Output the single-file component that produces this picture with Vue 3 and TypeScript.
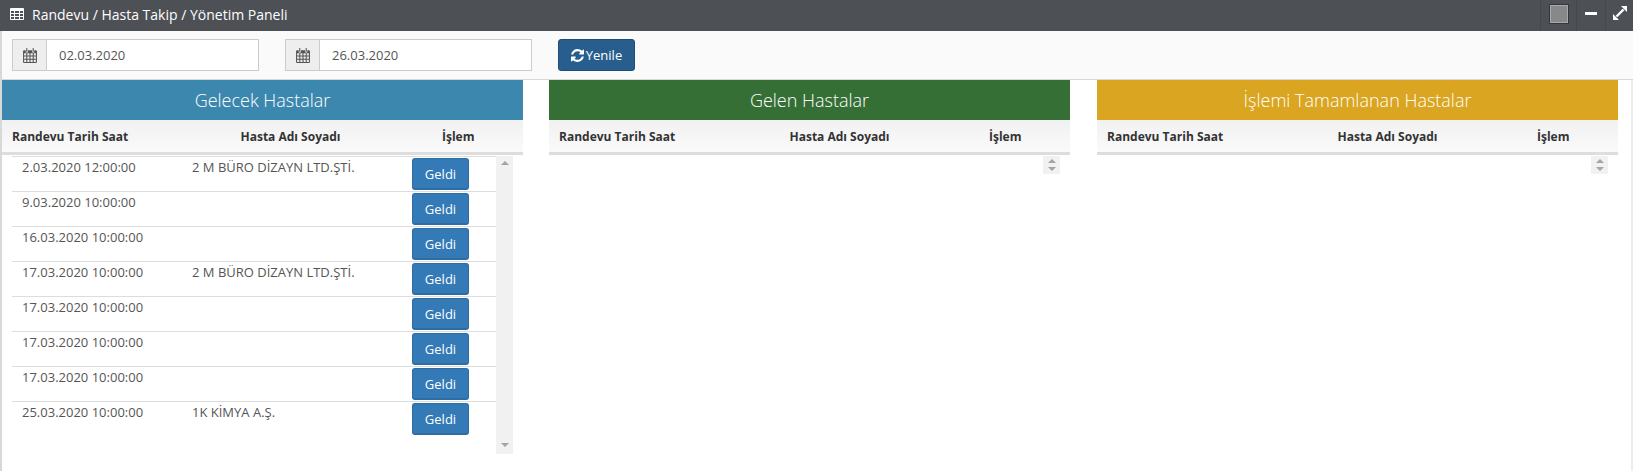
<script setup lang="ts">
interface Row { date: string; name: string }
const rows: Row[] = [
  { date: '2.03.2020 12:00:00', name: '2 M BÜRO DİZAYN LTD.ŞTİ.' },
  { date: '9.03.2020 10:00:00', name: '' },
  { date: '16.03.2020 10:00:00', name: '' },
  { date: '17.03.2020 10:00:00', name: '2 M BÜRO DİZAYN LTD.ŞTİ.' },
  { date: '17.03.2020 10:00:00', name: '' },
  { date: '17.03.2020 10:00:00', name: '' },
  { date: '17.03.2020 10:00:00', name: '' },
  { date: '25.03.2020 10:00:00', name: '1K KİMYA A.Ş.' },
]
const panels = [
  { title: 'Gelecek Hastalar', cls: 'blue', rows },
  { title: 'Gelen Hastalar', cls: 'green', rows: [] as Row[] },
  { title: 'İşlemi Tamamlanan Hastalar', cls: 'yellow', rows: [] as Row[] },
]
const dates = ['02.03.2020', '26.03.2020']
</script>

<template>
  <div class="page">
    <header class="topbar">
      <svg class="table-icon" viewBox="0 0 14 12" width="14" height="12">
        <path fill="#fff" fill-rule="evenodd" d="M1 0h12a1 1 0 0 1 1 1v10a1 1 0 0 1-1 1H1a1 1 0 0 1-1-1V1a1 1 0 0 1 1-1zM1 3v2h3V3zm4 0v2h4V3zm5 0v2h3V3zM1 6v2h3V6zm4 0v2h4V6zm5 0v2h3V6zM1 9v2h3V9zm4 0v2h4V9zm5 0v2h3V9z"/>
      </svg>
      <span class="caption">Randevu / Hasta Takip / Yönetim Paneli</span>
      <div class="tools">
        <div class="tool tool-square"><span class="square"></span></div>
        <div class="tool tool-min"><span class="minus"></span></div>
        <div class="tool tool-exp">
          <svg viewBox="0 0 14 14" width="14" height="14">
            <path fill="#fff" d="M8 0h6v6zM0 14V8l6 6z"/>
            <path stroke="#fff" stroke-width="2.4" d="M10.5 3.5l-7 7"/>
          </svg>
        </div>
      </div>
    </header>

    <div class="toolbar">
      <div v-for="d in dates" :key="d" class="date-group">
        <span class="addon">
          <svg viewBox="0 0 13 14" width="14" height="15">
            <path fill="#555" fill-rule="evenodd" d="M1 2h1.5v1.5a1 1 0 0 0 2 0V2h4v1.5a1 1 0 0 0 2 0V2H12a1 1 0 0 1 1 1v10a1 1 0 0 1-1 1H1a1 1 0 0 1-1-1V3a1 1 0 0 1 1-1zM1 5v2h2V5zm3 0v2h2V5zm3 0v2h2V5zm3 0v2h2V5zM1 8v2h2V8zm3 0v2h2V8zm3 0v2h2V8zm3 0v2h2V8zM1 11v2h2v-2zm3 0v2h2v-2zm3 0v2h2v-2zm3 0v2h2v-2z"/>
            <rect x="3" y="0" width="1" height="3.5" rx=".5" fill="#555"/>
            <rect x="9" y="0" width="1" height="3.5" rx=".5" fill="#555"/>
          </svg>
        </span>
        <span class="date-value">{{ d }}</span>
      </div>
      <button class="refresh" type="button">
        <svg viewBox="0 0 1536 1536" width="13" height="13">
          <path fill="#fff" d="M1511 928q0 5-1 7-64 268-268 434.5t-478 166.5q-146 0-282.5-55t-243.5-157l-129 129q-19 19-45 19t-45-19-19-45v-448q0-26 19-45t45-19h448q26 0 45 19t19 45-19 45l-137 137q71 66 161 102t187 36q134 0 250-65t186-179q11-17 53-117 8-23 30-23h192q13 0 22.5 9.5t9.5 22.5zm25-800v448q0 26-19 45t-45 19h-448q-26 0-45-19t-19-45 19-45l138-138q-148-137-349-137-134 0-250 65t-186 179q-11 17-53 117-8 23-30 23h-199q-13 0-22.5-9.5t-9.5-22.5v-7q65-268 270-434.5t480-166.5q146 0 284 55.5t245 156.5l130-129q19-19 45-19t45 19 19 45z"/>
        </svg>
        <span>Yenile</span>
      </button>
    </div>

    <main class="panels">
      <section v-for="p in panels" :key="p.title" class="panel">
        <h2 class="title" :class="p.cls">{{ p.title }}</h2>
        <div class="thead" :class="{ filled: p.rows.length }">
          <span class="th th-date">Randevu Tarih Saat</span>
          <span class="th th-name">Hasta Adı Soyadı</span>
          <span class="th th-act">İşlem</span>
        </div>
        <div class="tbody" :class="{ filled: p.rows.length }">
          <div class="list">
            <div v-for="(r, i) in p.rows" :key="i" class="row">
              <span class="cell-date">{{ r.date }}</span>
              <span class="cell-name">{{ r.name }}</span>
              <button class="geldi" type="button">Geldi</button>
            </div>
          </div>
          <div class="scrollbar">
            <span class="arrow up"></span>
            <span class="arrow down"></span>
          </div>
        </div>
      </section>
    </main>
  </div>
</template>

<style>
html, body { margin: 0; background: #fff; overflow: hidden; }
</style>

<style scoped>
.page {
  width: 1633px;
  height: 471px;
  box-sizing: border-box;
  font-family: "Open Sans", sans-serif;
  font-size: 13px;
  color: #555;
  overflow: hidden;
}
.topbar {
  height: 31px;
  background: #4d5055;
  display: flex;
  align-items: center;
  padding-left: 10px;
  color: #fff;
}
.table-icon { margin-right: 8px; margin-top: -4px; }
.caption { font-size: 14px; margin-top: -2px; }
.tools { margin-left: auto; display: flex; height: 31px; }
.tool {
  border-left: 1px solid #44474b;
  display: flex;
  align-items: center;
  justify-content: center;
  box-sizing: border-box;
}
.tool-square { width: 36px; padding-bottom: 3px; }
.tool-min { width: 29px; }
.tool-exp { width: 28px; }
.square {
  width: 16px;
  height: 16px;
  background: #87888a;
  border: 1px solid #a9a9aa;
  outline: 1px solid #35373a;
  display: block;
}
.minus { width: 12px; height: 3px; background: #fff; display: block; margin-bottom: 5px; }
.tool-exp svg { margin-bottom: 5px; }

.toolbar {
  height: 49px;
  box-sizing: border-box;
  background: #fafafa;
  border-bottom: 1px solid #d8d8d8;
  border-left: 2px solid #d8d8d8;
  padding: 8px 0 0 10px;
  display: flex;
  align-items: flex-start;
}
.date-group {
  width: 247px;
  height: 32px;
  box-sizing: border-box;
  border: 1px solid #ccc;
  background: #fff;
  display: flex;
  margin-right: 26px;
}
.addon {
  width: 33px;
  background: #eee;
  border-right: 1px solid #ccc;
  display: flex;
  align-items: center;
  justify-content: center;
}
.date-value { padding-left: 12px; line-height: 30px; color: #555; }
.refresh {
  width: 77px;
  height: 32px;
  margin: 0;
  padding: 0;
  box-sizing: border-box;
  background: #285e8e;
  border: 1px solid #204d74;
  border-radius: 3px;
  color: #fff;
  font: 13px "Open Sans", sans-serif;
  display: flex;
  align-items: center;
  justify-content: center;
  gap: 2px;
}

.panels {
  display: flex;
  gap: 26px;
  padding-left: 2px;
  height: 391px;
  box-shadow: inset 2px 0 0 #d8d8d8, inset -2px 0 0 #ececec;
}
.panel { width: 521px; flex: none; }
.panel:nth-child(3) { margin-left: 1px; }
.title {
  margin: 0;
  height: 40px;
  font-size: 18px;
  font-weight: 300;
  line-height: 40px;
  text-align: center;
  color: #fff;
}
.blue { background: #3c87ae; }
.green { background: #356f35; }
.yellow { background: #daa520; }
.thead {
  height: 35px;
  box-sizing: border-box;
  background: linear-gradient(#f1f1f1, #fafafa);
  border-bottom: 3px solid #ddd;
  font-size: 12px;
  font-weight: 700;
  color: #333;
  display: grid;
  grid-template-columns: 183px 225px 1fr;
  align-items: center;
  padding-left: 10px;
}
.th { white-space: nowrap; }
.th-name { padding-left: 47.5px; }
.thead.filled .th-name { padding-left: 45.5px; }
.th-act { padding-left: 22px; }

.tbody {
  display: flex;
  padding: 1px 10px 0 10px;
  justify-content: flex-end;
}
.tbody.filled { justify-content: flex-start; }
.tbody:not(.filled) .list { display: none; }
.list { width: 484px; flex: none; }
.row {
  height: 35px;
  box-sizing: border-box;
  border-top: 1px solid #ddd;
  display: grid;
  grid-template-columns: 170px 220px 1fr;
  padding-left: 10px;
  line-height: 18px;
}
.cell-date { padding-top: 1px; }
.cell-name { padding-top: 1px; white-space: nowrap; }
.geldi {
  width: 57px;
  height: 32px;
  margin: 1px 0 0 0;
  padding: 0;
  box-sizing: border-box;
  background: #337ab7;
  border: 1px solid #2e6da4;
  border-bottom-width: 2px;
  border-radius: 3px;
  color: #fff;
  font: 13px "Open Sans", sans-serif;
}
.scrollbar {
  width: 17px;
  background: #f1f1f1;
  display: flex;
  flex-direction: column;
  justify-content: space-between;
  align-items: center;
  box-sizing: border-box;
  height: 18px;
  padding: 3px 0;
}
.filled .scrollbar { height: 298px; padding: 5px 0 7px; }
.arrow { width: 0; height: 0; border-left: 4px solid transparent; border-right: 4px solid transparent; }
.up { border-bottom: 4px solid #a3a3a3; }
.down { border-top: 4px solid #a3a3a3; }
</style>
